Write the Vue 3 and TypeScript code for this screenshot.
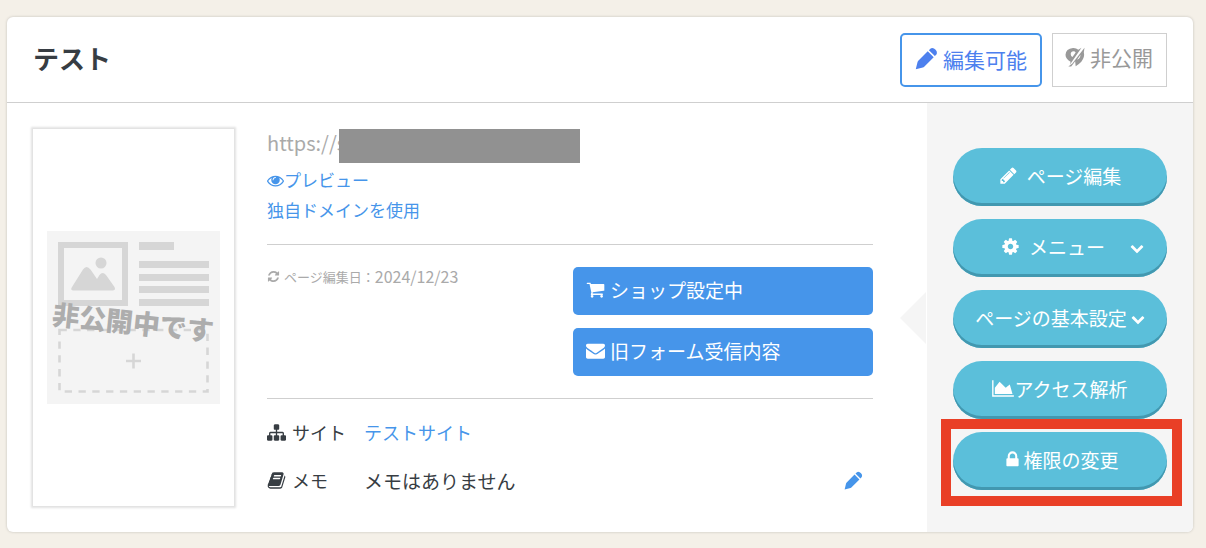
<script setup lang="ts">
interface Icon {
  box: string
  d: string
}

const icons: Record<string, Icon> = {
  pencil: {
    box: '0 0 1792 1792',
    d: 'M491 1536l91-91-235-235-91 91v107h128v128h107zm523-928q0-22-22-22-10 0-17 7l-542 542q-7 7-7 17 0 22 22 22 10 0 17-7l542-542q7-7 7-17zm-54-192l416 416-832 832h-416v-416zm683 96q0 53-37 90l-166 166-416-416 166-165q36-38 90-38 53 0 91 38l235 234q37 39 37 91z',
  },
  pen: {
    box: '0 0 24 24',
    d: 'M.8 23.300L2.600 15.800Q2.800 15 3.400 14.400L13.300 4.500L19.500 10.700L9.600 20.600Q9 21.200 8.200 21.400ZM14.500 3.300L16 1.800Q17.600 .5 19.800 1.500Q21.800 2.500 22.600 4.400Q23.400 6.600 22.200 8L20.700 9.500Z',
  },
  hidden: {
    box: '0 0 24 24',
    d: 'M19.800 .8L6 21L6.700 17.600Q.6 14.400 .6 9.400Q1 2 9.600 1.200Q13.400 1 16 3.400ZM10.200 5Q7 5.200 6.800 8.400Q7 11.200 9 12L12.800 6.600Q12 5 10.200 5ZM23.400 1L22.600 6.400Q24 12.400 19.600 17.600Q17 20.400 12.800 23L12.200 17.200L10 20.200L7.400 23.400L4 23.400L8.800 19.800ZM18.600 9.200L14.400 15.200Q18.400 13.800 18.600 9.200Z',
  },
  cog: {
    box: '0 0 1792 1792',
    d: 'M1152 896q0-106-75-181t-181-75-181 75-75 181 75 181 181 75 181-75 75-181zm512-109v222q0 12-8 23t-20 13l-185 28q-19 54-39 91 35 50 107 138 10 12 10 25t-9 23q-27 37-99 108t-94 71q-12 0-26-9l-138-108q-44 23-91 38-16 136-29 186-7 28-36 28h-222q-14 0-24.5-8.5t-11.5-21.5l-28-184q-49-16-90-37l-141 107q-10 9-25 9-14 0-25-11-126-114-165-168-7-10-7-23 0-12 8-23 15-21 51-66.5t54-70.5q-27-50-41-99l-183-27q-13-2-21-12.5t-8-23.5v-222q0-12 8-23t19-13l186-28q14-46 39-92-40-57-107-138-10-12-10-24 0-10 9-23 26-36 98.5-107.5t94.5-71.5q13 0 26 10l138 107q44-23 91-38 16-136 29-186 7-28 36-28h222q14 0 24.5 8.5t11.5 21.5l28 184q49 16 90 37l142-107q9-9 24-9 13 0 25 10 129 119 165 170 7 8 7 22 0 12-8 23-15 21-51 66.5t-54 70.5q26 50 41 98l183 28q13 2 21 12.5t8 23.5z',
  },
  eye: {
    box: '0 0 1792 1792',
    d: 'M1664 960q-152-236-381-353 61 104 61 225 0 185-131.5 316.5t-316.5 131.5-316.5-131.5-131.5-316.5q0-121 61-225-229 117-381 353 133 205 333.5 326.5t434.5 121.5 434.5-121.5 333.5-326.5zm-720-384q0-20-14-34t-34-14q-125 0-214.5 89.5t-89.5 214.5q0 20 14 34t34 14 34-14 14-34q0-86 61-147t147-61q20 0 34-14t14-34zm848 384q0 34-20 69-140 230-376.5 368.5t-499.5 138.5-499.5-139-376.5-368q-20-35-20-69t20-69q140-229 376.5-368t499.5-139 499.5 139 376.5 368q20 35 20 69z',
  },
  refresh: {
    box: '0 0 1792 1792',
    d: 'M1639 1056q0 5-1 7-64 268-268 434.5t-478 166.5q-146 0-282.5-55t-243.5-157l-129 129q-19 19-45 19t-45-19-19-45v-448q0-26 19-45t45-19h448q26 0 45 19t19 45-19 45l-137 137q71 66 161 102t187 36q134 0 250-65t186-179q11-17 53-117 8-23 30-23h192q13 0 22.5 9.5t9.5 22.5zm25-800v448q0 26-19 45t-45 19h-448q-26 0-45-19t-19-45 19-45l138-138q-148-137-349-137-134 0-250 65t-186 179q-11 17-53 117-8 23-30 23h-199q-13 0-22.5-9.5t-9.5-22.5v-7q65-268 270-434.5t480-166.5q146 0 284 55.5t245 156.5l130-129q19-19 45-19t45 19 19 45z',
  },
  cart: {
    box: '0 0 1792 1792',
    d: 'M704 1536q0 52-38 90t-90 38-90-38-38-90 38-90 90-38 90 38 38 90zm896 0q0 52-38 90t-90 38-90-38-38-90 38-90 90-38 90 38 38 90zm128-1088v512q0 24-16.5 42.5t-40.5 21.5l-1044 122q13 60 13 70 0 16-24 64h920q26 0 45 19t19 45-19 45-45 19h-1024q-26 0-45-19t-19-45q0-11 8-31.5t16-36 21.5-40 15.5-29.5l-177-823h-204q-26 0-45-19t-19-45 19-45 45-19h256q16 0 28.5 6.5t19.5 15.5 13 24.5 8 26 5.5 29.5 4.5 26h1201q26 0 45 19t19 45z',
  },
  envelope: {
    box: '0 0 1792 1792',
    d: 'M1792 710v794q0 66-47 113t-113 47h-1472q-66 0-113-47t-47-113v-794q44 49 101 87 362 246 497 345 57 42 92.5 65.5t94.5 48 110 24.5h2q51 0 110-24.5t94.5-48 92.5-65.5q170-123 498-345 57-39 100-87zm0-294q0 79-49 151t-122 123q-376 261-468 325-10 7-42.5 31t-54 38.5-52 32.5-57.5 27-50 9h-2q-23 0-50-9t-57.5-27-52-32.5-54-38.5-42.5-31q-91-64-262-182.5t-205-142.5q-62-42-117-115.5t-55-136.5q0-78 41.5-130t118.5-52h1472q65 0 112.5 47t47.5 113z',
  },
  sitemap: {
    box: '0 0 1792 1792',
    d: 'M1792 1248v320q0 40-28 68t-68 28h-320q-40 0-68-28t-28-68v-320q0-40 28-68t68-28h96v-192h-512v192h96q40 0 68 28t28 68v320q0 40-28 68t-68 28h-320q-40 0-68-28t-28-68v-320q0-40 28-68t68-28h96v-192h-512v192h96q40 0 68 28t28 68v320q0 40-28 68t-68 28h-320q-40 0-68-28t-28-68v-320q0-40 28-68t68-28h96v-192q0-52 38-90t90-38h512v-192h-96q-40 0-68-28t-28-68v-320q0-40 28-68t68-28h320q40 0 68 28t28 68v320q0 40-28 68t-68 28h-96v192h512q52 0 90 38t38 90v192h96q40 0 68 28t28 68z',
  },
  book: {
    box: '0 0 1792 1792',
    d: 'M1703 478q40 57 18 129l-275 906q-19 64-76.5 107.5t-122.5 43.5h-923q-77 0-148.5-53.5t-99.5-131.5q-24-67-2-127 0-4 3-27t4-37q1-8-3-21.5t-3-19.5q2-11 8-21t16.5-23.5 16.5-23.5q23-38 45-91.5t30-91.5q3-10 .5-30t-.5-28q3-11 17-28t17-23q21-36 42-92t25-90q1-9-2.5-32t.5-28q4-13 22-30.5t22-22.5q19-26 42.5-84.5t27.5-96.5q1-8-3-25.5t-2-26.5q2-8 9-18t18-23 17-21q8-12 16.5-30.5t15-35 16-36 19.5-32 26.5-23.5 36-11.5 47.5 5.5l-1 3q38-9 51-9h761q74 0 114 56t18 130l-274 906q-36 119-71.5 153.5t-128.5 34.5h-869q-27 0-38 15-11 16-1 43 24 70 144 70h923q29 0 56-15.5t35-41.5l300-987q7-22 5-57 38 15 59 43zm-1064 2q-4 13 2 22.5t20 9.5h608q13 0 25.5-9.5t16.5-22.5l21-64q4-13-2-22.5t-20-9.5h-608q-13 0-25.5 9.5t-16.5 22.5zm-83 256q-4 13 2 22.5t20 9.5h608q13 0 25.5-9.5t16.5-22.5l21-64q4-13-2-22.5t-20-9.5h-608q-13 0-25.5 9.5t-16.5 22.5z',
  },
  chart: {
    box: '0 0 2048 1792',
    d: 'M2048 1536v128h-2048v-1536h128v1408h1920zm-384-1024l256 896h-1664v-576l448-576 576 576z',
  },
  lock: {
    box: '320 0 1152 1792',
    d: 'M640 768h512v-192q0-106-75-181t-181-75-181 75-75 181v192zm832 96v576q0 40-28 68t-68 28h-960q-40 0-68-28t-28-68v-576q0-40 28-68t68-28h32v-192q0-184 132-316t316-132 316 132 132 316v192h32q40 0 68 28t28 68z',
  },
  chevron: {
    box: '0 0 1792 1792',
    d: 'M1683 808l-742 741q-19 19-45 19t-45-19l-742-741q-19-19-19-45.5t19-45.5l166-165q19-19 45-19t45 19l531 531 531-531q19-19 45-19t45 19l166 165q19 19 19 45.5t-19 45.5z',
  },
}

interface Action {
  label: string
  icon?: string
  kind: string
  dropdown?: boolean
  marked?: boolean
}

const actions: Action[] = [
  { label: 'ページ編集', icon: 'pencil', kind: 'spaced' },
  { label: 'メニュー', icon: 'cog', kind: 'spaced menu', dropdown: true },
  { label: 'ページの基本設定', kind: 'basic', dropdown: true },
  { label: 'アクセス解析', icon: 'chart', kind: 'tight' },
  { label: '権限の変更', icon: 'lock', kind: 'near', marked: true },
]

const forms = [
  { label: 'ショップ設定中', icon: 'cart' },
  { label: '旧フォーム受信内容', icon: 'envelope' },
]
</script>

<template>
  <article class="card">
    <header class="head">
      <h1>テスト</h1>
      <button type="button" class="state editable">
        <svg class="icon" :viewBox="icons.pen.box" aria-hidden="true"><path :d="icons.pen.d" /></svg>編集可能
      </button>
      <button type="button" class="state private">
        <svg class="icon" :viewBox="icons.hidden.box" aria-hidden="true"><path fill-rule="evenodd" :d="icons.hidden.d" /></svg>非公開
      </button>
    </header>

    <div class="body">
      <div class="main">
        <div class="thumb">
          <svg viewBox="0 0 173 173" role="img" aria-label="非公開中です">
            <rect width="173" height="173" fill="#f4f4f4" />
            <rect x="14" y="14" width="64" height="58" fill="none" stroke="#d6d6d6" stroke-width="6" />
            <circle cx="54" cy="32" r="5.5" fill="#d6d6d6" />
            <path d="M26 59.500Q23 59 25 56L36 38.500Q39.500 33.500 43.500 38.500L50 48L52.500 44Q55.500 40 59 44L67.500 56Q69 59 66 59.500Z" fill="#d6d6d6" />
            <path d="M92 11h35v8h-35zM92 30h70v7h-70zM92 43h70v7h-70zM92 55h70v7h-70zM92 68h70v7h-70z" fill="#d6d6d6" />
            <rect x="12.500" y="99" width="148" height="61.500" fill="none" stroke="#d6d6d6" stroke-width="2.600" stroke-dasharray="7.300 6.500" />
            <path d="M79 130h15M86.500 122.500v15" stroke="#d6d6d6" stroke-width="2.600" />
            <text class="stamp" x="86" y="102" text-anchor="middle" transform="rotate(6 87 92)">非公開中です</text>
          </svg>
        </div>

        <div class="info">
          <section class="address">
            <p class="url"><span>https://s</span><span class="mask"></span></p>
            <a href="#preview"><svg class="icon" :viewBox="icons.eye.box" aria-hidden="true"><path :d="icons.eye.d" /></svg>プレビュー</a>
            <a href="#domain">独自ドメインを使用</a>
          </section>

          <section class="middle">
            <p class="date">
              <svg class="icon" :viewBox="icons.refresh.box" aria-hidden="true"><path :d="icons.refresh.d" /></svg>ページ編集日：<time datetime="2024-12-23">2024/12/23</time>
            </p>
            <div class="forms">
              <button v-for="f in forms" :key="f.label" type="button">
                <svg class="icon" :viewBox="icons[f.icon].box" aria-hidden="true"><path :d="icons[f.icon].d" /></svg>{{ f.label }}
              </button>
            </div>
          </section>

          <dl>
            <div>
              <dt><svg class="icon" :viewBox="icons.sitemap.box" aria-hidden="true"><path :d="icons.sitemap.d" /></svg>サイト</dt>
              <dd><a href="#site">テストサイト</a></dd>
            </div>
            <div>
              <dt><svg class="icon" :viewBox="icons.book.box" aria-hidden="true"><path :d="icons.book.d" /></svg>メモ</dt>
              <dd class="memo">メモはありません</dd>
              <button type="button" class="edit" aria-label="メモを編集">
                <svg class="icon" :viewBox="icons.pen.box" aria-hidden="true"><path :d="icons.pen.d" /></svg>
              </button>
            </div>
          </dl>
        </div>
      </div>

      <aside class="side">
        <div v-for="a in actions" :key="a.label" class="slot" :class="{ marked: a.marked }">
          <button type="button" class="pill" :class="a.kind">
            <svg v-if="a.icon" class="icon" :viewBox="icons[a.icon].box" aria-hidden="true"><path :d="icons[a.icon].d" /></svg>
            <span>{{ a.label }}</span>
            <svg v-if="a.dropdown" class="icon chevron" :viewBox="icons.chevron.box" aria-hidden="true"><path :d="icons.chevron.d" /></svg>
          </button>
        </div>
      </aside>
    </div>
  </article>
</template>

<style>
body {
  background: #f4f0e8;
}
</style>

<style scoped>
.card {
  margin: 17px 13px 15px 7px;
  background: #fff;
  border-radius: 6px;
  box-shadow: 0 0 3px rgba(0, 0, 0, 0.2);
  color: #373d43;
  font-family: "Noto Sans CJK JP", sans-serif;
  font-size: 19px;
}
h1, p, dl, dd {
  margin: 0;
}
button {
  font: inherit;
  cursor: pointer;
}
a {
  color: #4695ea;
  text-decoration: none;
}
.icon {
  width: 19px;
  height: 19px;
  flex: none;
  fill: currentColor;
}
.head {
  display: flex;
  align-items: center;
  height: 85px;
  padding: 0 26px;
  border-bottom: 1px solid #cfcfcf;
}
h1 {
  flex: 1;
  padding-bottom: 4px;
  font-size: 26px;
  line-height: 40px;
  font-weight: 700;
}
.state {
  display: flex;
  align-items: center;
  box-sizing: border-box;
  height: 54px;
  background: #fff;
  font-size: 21px;
}
.editable {
  gap: 5px;
  padding: 0 13px 2px;
  border: 2px solid #4695ea;
  border-radius: 5px;
  color: #4d80ee;
}
.editable .icon {
  width: 23px;
  height: 23px;
}
.private {
  gap: 5px;
  margin-left: 10px;
  padding: 0 13px 5px 12px;
  border: 1px solid #cfcfcf;
  color: #999;
}
.private .icon {
  width: 20px;
  height: 20px;
}
.body {
  display: flex;
}
.main {
  position: relative;
  display: flex;
  flex: 1;
  gap: 33px;
  padding: 26px 54px 26px 26px;
}
.main::after {
  content: "";
  position: absolute;
  top: 189px;
  right: 1px;
  border: 26px solid transparent;
  border-left-width: 0;
  border-right-color: #f5f5f5;
}
.thumb {
  display: flex;
  align-items: center;
  justify-content: center;
  box-sizing: border-box;
  width: 201px;
  box-shadow: 0 0 2px 2px #e2e2e2;
}
.thumb svg {
  width: 173px;
  height: 173px;
}
.stamp {
  font-size: 27px;
  font-weight: 900;
  fill: #adadad;
}
.info {
  flex: 1;
}
.address {
  display: flex;
  flex-direction: column;
  align-items: flex-start;
  padding-bottom: 19px;
  border-bottom: 1px solid #cfcfcf;
}
.address a {
  display: flex;
  align-items: center;
  font-size: 17px;
  line-height: 30px;
}
.address a .icon {
  width: 17px;
  height: 17px;
}
.url {
  display: flex;
  height: 34px;
  margin-bottom: 2px;
  color: #aaa;
  font-size: 20px;
  line-height: 28px;
}
.mask {
  width: 241px;
  margin-left: -7px;
  background: #919191;
  z-index: 1;
}
.middle {
  display: flex;
  justify-content: space-between;
  padding: 22px 0;
  border-bottom: 1px solid #cfcfcf;
}
.date {
  display: flex;
  align-items: center;
  height: 18px;
  color: #aaa;
  font-size: 13px;
}
.date .icon {
  width: 13px;
  height: 13px;
  margin-right: 4px;
}
.date time {
  font-size: 16px;
}
.forms {
  display: grid;
  gap: 13px;
  width: 300px;
}
.forms button {
  display: flex;
  align-items: center;
  gap: 5px;
  height: 48px;
  padding: 0 13px 3px;
  border: 0;
  border-radius: 5px;
  background: #4695ea;
  color: #fff;
}
dl {
  padding-top: 9px;
}
dl div {
  display: flex;
  align-items: center;
  height: 48px;
}
dt {
  display: flex;
  align-items: center;
  gap: 6px;
  width: 97px;
  font-size: 18px;
}
dd {
  flex: 1;
  font-size: 18px;
}
dd.memo {
  font-size: 19px;
}
.edit {
  display: flex;
  padding: 0 10px;
  border: 0;
  background: none;
  color: #4695ea;
}
.side {
  display: flex;
  flex-direction: column;
  gap: 13px;
  box-sizing: border-box;
  width: 266px;
  padding: 45px 26px 42px;
  border-radius: 0 0 6px 0;
  background: #f5f5f5;
}
.slot {
  position: relative;
}
.marked::after {
  content: "";
  position: absolute;
  inset: -13px -15px -16px -12px;
  border: 10px solid #e93f26;
  pointer-events: none;
}
.pill {
  display: flex;
  align-items: center;
  justify-content: center;
  width: 100%;
  height: 58px;
  padding: 0 0 4px;
  border: 0;
  border-radius: 29px;
  background: #5bbfda;
  box-shadow: inset 0 -3px #4298b0;
  color: #fff;
}
.spaced {
  gap: 9px;
}
.menu {
  justify-content: flex-start;
  padding: 0 23px 4px 48px;
}
.menu .chevron {
  margin-left: auto;
}
.basic {
  gap: 4px;
}
.near {
  gap: 4px;
  padding-left: 5px;
}
.near .icon {
  width: 13px;
}
.tight .icon {
  width: 22px;
}
.pill .chevron {
  width: 14px;
  height: 14px;
  margin-top: 4px;
}
</style>
